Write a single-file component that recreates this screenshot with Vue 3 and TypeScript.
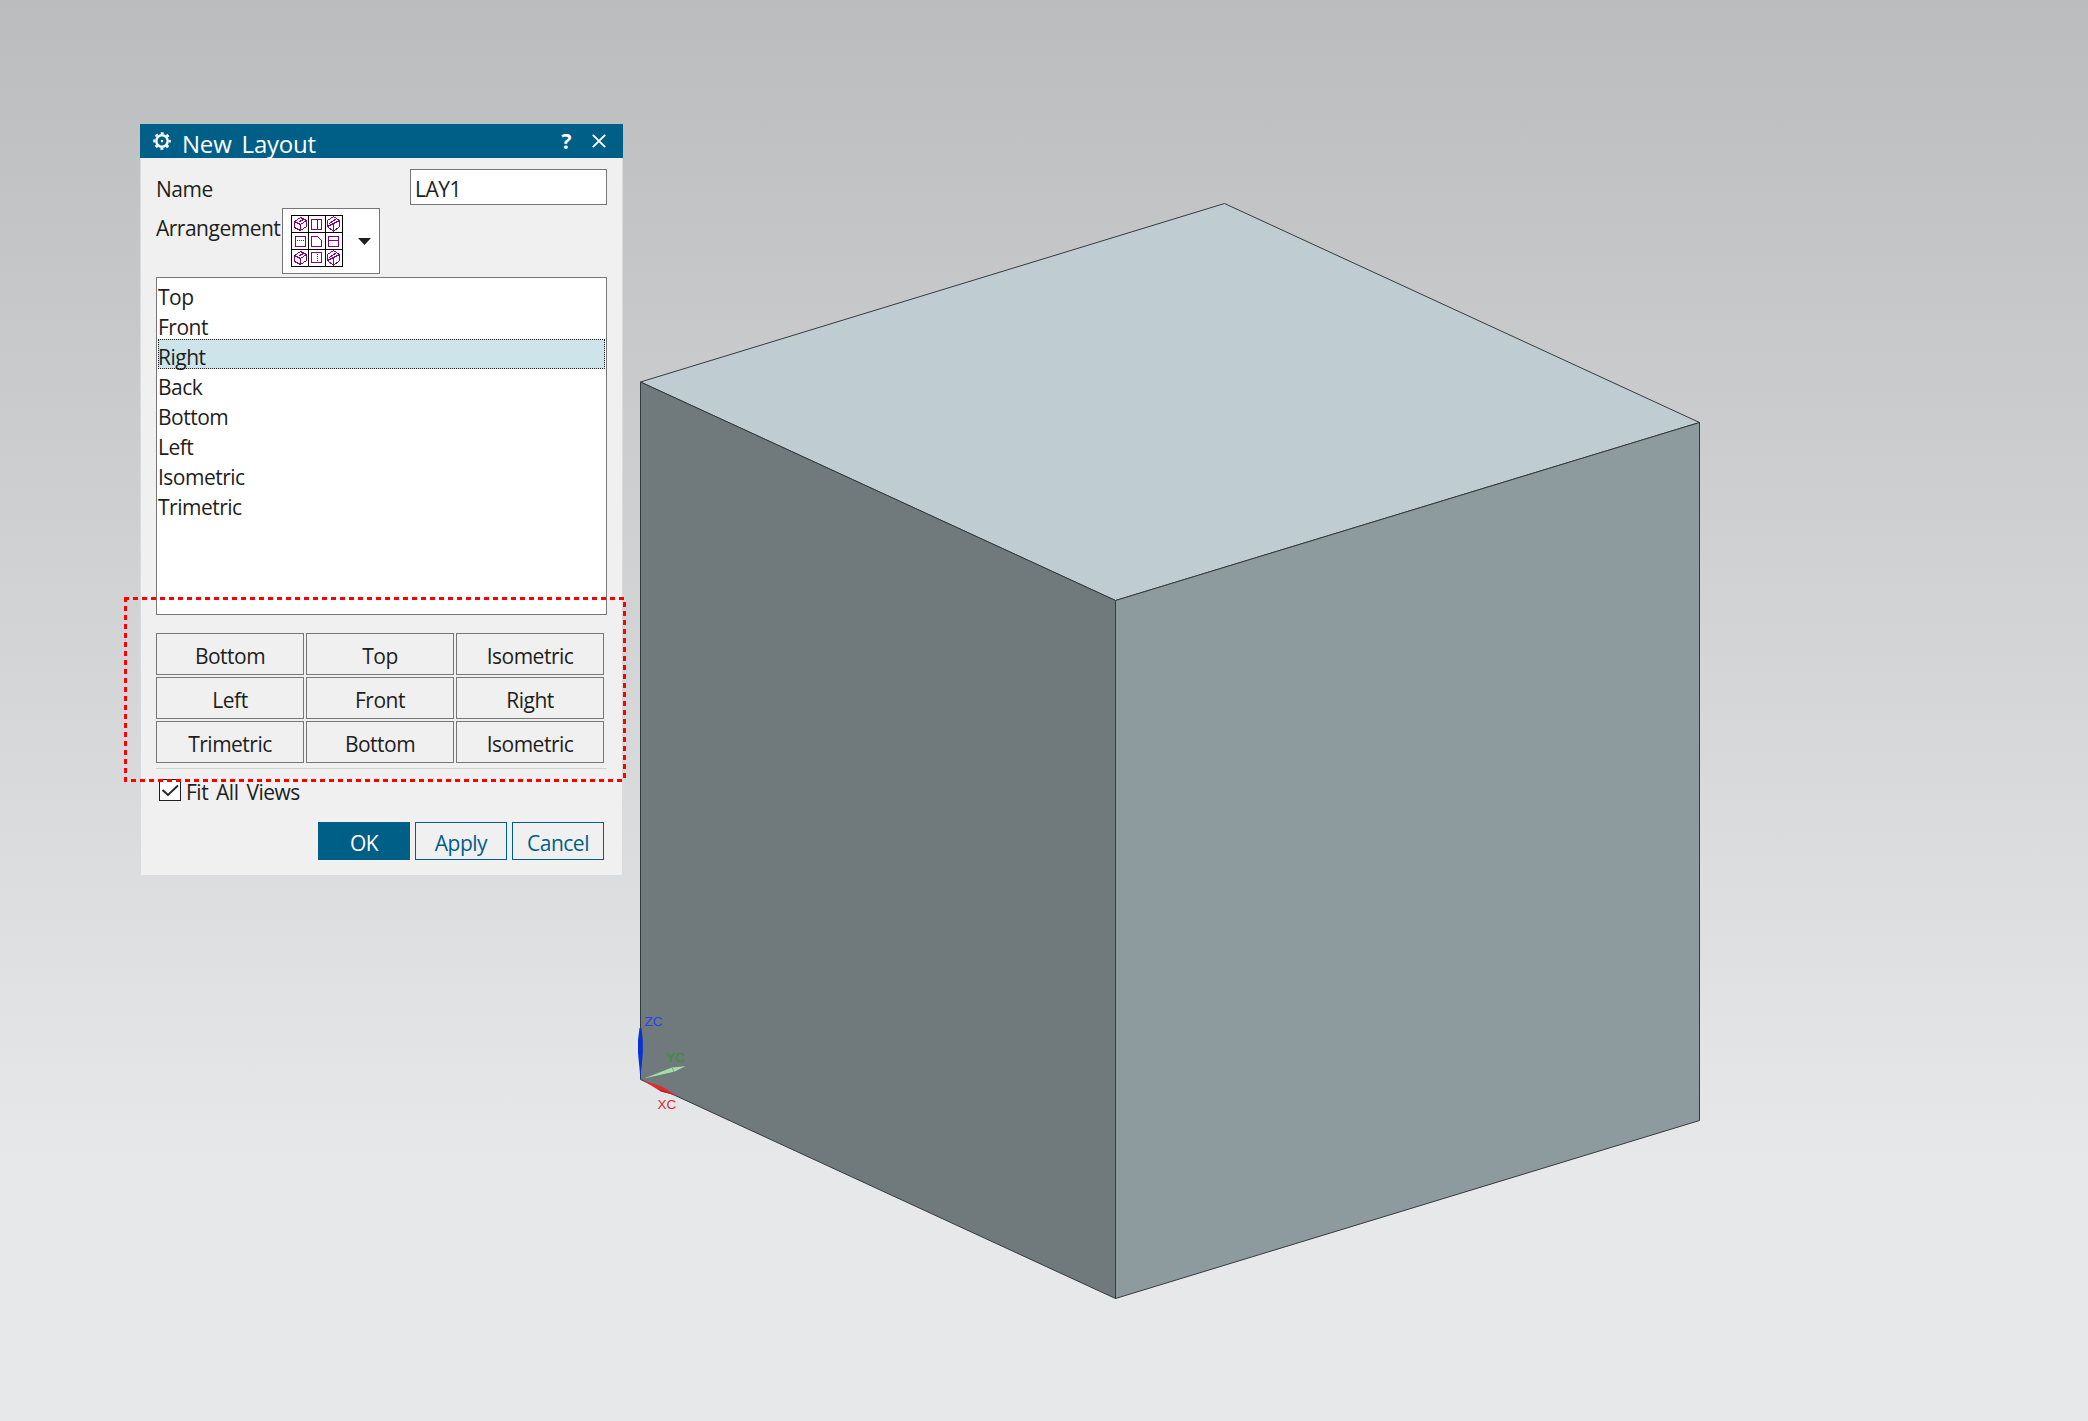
<script setup lang="ts">
import { ref } from 'vue'

const views = ['Top', 'Front', 'Right', 'Back', 'Bottom', 'Left', 'Isometric', 'Trimetric']
const slots = ['Bottom', 'Top', 'Isometric', 'Left', 'Front', 'Right', 'Trimetric', 'Bottom', 'Isometric']
const selected = ref('Right')
const name = ref('LAY1')
const fitAll = ref(true)
</script>

<template>
  <main class="viewport">
    <svg class="scene" width="2088" height="1421" viewBox="0 0 2088 1421">
      <g stroke="#343b3d" stroke-width="1" stroke-linejoin="round">
        <path d="M640.500 382 1224.500 203.500 1699.500 422.500 1115.500 600.500Z" fill="#bfcdd2" />
        <path d="M640.500 382 1115.500 600.500V1298.500L640.500 1079.500Z" fill="#70797c" />
        <path d="M1115.500 600.500 1699.500 422.500V1120.500L1115.500 1298.500Z" fill="#8d9a9e" />
      </g>
      <path d="M640.500 1079 638 1053V1040L639.500 1028H641.500L642.800 1040V1053Z" fill="#0a32d2" />
      <path d="M644 1078.500 672 1067.500 685.500 1066.300 674 1071.800Z" fill="#a5dfa8" />
      <path d="M672 1067.500 674 1071.800" stroke="#79a47c" />
      <path d="M642 1080 662 1086.500 676.500 1095.500 661 1091.500Z" fill="#e02a2a" />
      <path d="M658 1089 676.500 1095.500 661 1091.500Z" fill="#a81f22" />
      <g class="axis">
        <text x="644.500" y="1026" fill="#2545f0">ZC</text>
        <text x="666" y="1062" fill="#2f9236">YC</text>
        <text x="657.500" y="1109" fill="#d42a30">XC</text>
      </g>
    </svg>

    <section class="dialog">
      <header class="title">
        <svg class="gear" width="18" height="18" viewBox="0 0 18 18">
          <circle cx="9" cy="9" r="5.700" fill="none" stroke="#fff" stroke-width="2.400" />
          <circle cx="9" cy="9" r="7.800" fill="none" stroke="#fff" stroke-width="2" stroke-dasharray="3 3.126" stroke-dashoffset="1.500" />
          <circle cx="9" cy="9" r="1.200" fill="#fff" />
        </svg>
        <h1>New Layout</h1>
        <span class="help">?</span>
        <svg class="close" width="14" height="14" viewBox="0 0 14 14"><path d="M.800.800 13.200 13.200M13.200.800.800 13.200" stroke="#fff" stroke-width="1.900" /></svg>
      </header>
      <div class="body">
        <div class="name-row">
          <label>Name</label>
          <input v-model="name" type="text" spellcheck="false" />
        </div>
        <div class="arr-row">
          <label>Arrangement</label>
          <button class="combo">
            <svg width="52" height="52" viewBox="0 0 52 52" shape-rendering="crispEdges" fill="none">
              <path d="M.500.500H51.500V51.500H.500ZM17.500 0V52M34.500 0V52M0 17.500H52M0 34.500H52" stroke="#000" />
              <g stroke="#800080">
                <g v-for="y in [0, 34]" :key="y" :transform="`translate(0 ${y})`">
                  <path d="M9.500 2.500 15.500 5.500V11.500L9.500 15.500 3.500 12.500V6.500ZM3.500 6.500 9.500 9.500 15.500 5.500M9.500 9.500V15.500M8.500 6.500 12.500 4.500" />
                  <path d="M42.500 1.500 48.500 5.500V11.500L42.500 16.500 36.500 11.500V5.500ZM36.500 11.500 42.500 8.500 48.500 5.500M42.500 8.500V16.500M38.500 8.500 45.500 3.500" />
                </g>
                <path d="M20.500 4.500H30.500V14.500H20.500ZM26.500 4.500V14.500" />
                <path d="M4.500 21.500H14.500V31.500H4.500Z" />
                <path d="M6 25.500H14" stroke-dasharray="1 1" />
                <path d="M20.500 21.500H26.500L30.500 25.500V31.500H20.500Z" />
                <path d="M37.500 21.500H47.500V31.500H37.500ZM37.500 25.500H47.500" />
                <path d="M20.500 37.500H30.500V47.500H20.500Z" />
                <path d="M26.500 39V47" stroke-dasharray="1 1" />
              </g>
            </svg>
            <svg class="caret" width="13" height="7" viewBox="0 0 13 7"><path d="M0 0H13L6.500 7Z" fill="#1e1e1e" /></svg>
          </button>
        </div>
        <ul class="list">
          <li v-for="v in views" :key="v" :class="{ on: v === selected }" @click="selected = v">{{ v }}</li>
        </ul>
        <div class="slots">
          <button v-for="(s, i) in slots" :key="i">{{ s }}</button>
        </div>
        <hr />
        <div class="fit" @click="fitAll = !fitAll">
          <span class="box">
            <svg v-if="fitAll" width="20" height="20" viewBox="0 0 20 20"><path d="M2.500 10 8 15 18 5.500" fill="none" stroke="#2a2a2a" stroke-width="2" /></svg>
          </span>
          <span>Fit All Views</span>
        </div>
        <footer>
          <button class="primary">OK</button>
          <button>Apply</button>
          <button>Cancel</button>
        </footer>
      </div>
    </section>

    <svg class="marker" width="504" height="187" viewBox="0 0 504 187" shape-rendering="crispEdges" fill="none" stroke="#f00" stroke-width="3" stroke-dasharray="5 4">
      <path d="M0 1.500H501" />
      <path d="M500.500 5V184" />
      <path d="M7 183.500H499" />
      <path d="M1.500 0V186" />
    </svg>
  </main>
</template>

<style>
body { margin: 0; }
</style>

<style scoped>
.viewport {
  position: relative;
  width: 2088px;
  height: 1421px;
  overflow: hidden;
  background: linear-gradient(#bbbcbe 0, #e7e8ea 82%, #e7e8ea 100%);
  font-family: "Open Sans", "Noto Sans", sans-serif;
  font-size: 21px;
  letter-spacing: -0.5px;
  color: #1e1e1e;
}
.scene { position: absolute; left: 0; top: 0; }
.axis { font: 13.500px "Liberation Sans", sans-serif; letter-spacing: 0; }
.dialog { position: absolute; left: 140px; top: 124px; width: 483px; }
.title { display: flex; align-items: center; height: 34px; background: #005f87; color: #fff; box-sizing: border-box; padding: 0 17px 0 13px; }
.title h1 { margin: 6px auto 0 11px; font-size: 24px; font-weight: 400; line-height: 30px; letter-spacing: -0.2px; word-spacing: 4px; }
.help { font: bold 21px/30px "Open Sans", sans-serif; margin-right: 21px; }
.body { margin: 0 1px; height: 717px; background: #f0f0f0; box-sizing: border-box; padding: 11px 15px 0; box-shadow: -1px 0 #d9dadb, 1px 0 #d9dadb; }
button, input { font: inherit; letter-spacing: inherit; color: inherit; border-radius: 0; box-sizing: border-box; margin: 0; }
.name-row { display: flex; justify-content: space-between; height: 39px; }
.name-row label { line-height: 41px; }
.name-row input { width: 197px; height: 36px; border: 1px solid #777; background: #fff; padding: 4px 4px 0; outline: 0; }
.arr-row { display: flex; justify-content: space-between; width: 224px; height: 69px; }
.arr-row label { line-height: 40px; width: 126px; }
.combo { display: flex; align-items: center; width: 98px; height: 66px; flex: none; border: 1px solid #777; background: #fff; padding: 0 8px; justify-content: space-between; }
.list { list-style: none; margin: 0; padding: 1px; height: 338px; box-sizing: border-box; border: 1px solid #777; background: #fff; }
.list li { height: 30px; line-height: 36px; box-sizing: border-box; padding-left: 0; }
.list li.on { background: #cde5ea; border: 1px dotted #1e1e1e; line-height: 34px; text-indent: -1px; }
.slots { display: grid; grid-template-columns: repeat(3, 148px); grid-auto-rows: 42px; gap: 2px; margin-top: 18px; }
.slots button { border: 1px solid #777; background: #f0f0f0; padding: 4px 0 0; }
hr { margin: 5px 0 0; border: 0; height: 1px; background: #d2d2d2; }
.fit { display: flex; margin: 10px 0 0 3px; height: 22px; gap: 5px; line-height: 26px; word-spacing: 3px; }
.box { width: 22px; height: 22px; box-sizing: border-box; border: 1px solid #1e1e1e; background: #fff; display: flex; }
footer { display: flex; justify-content: flex-end; gap: 5px; margin: 21px 3px 0 0; }
footer button { width: 92px; height: 38px; border: 1px solid #005f87; background: #f0f0f0; color: #005f87; padding: 4px 0 0; line-height: 30px; }
footer .primary { background: #005f87; color: #fff; }
.marker { position: absolute; left: 124px; top: 597px; }
</style>
